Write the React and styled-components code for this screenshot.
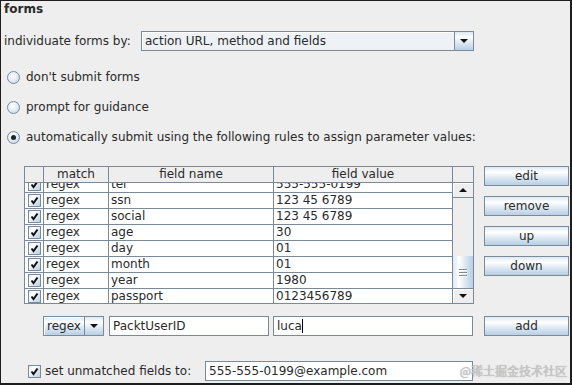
import React from "react";
import styled, { createGlobalStyle } from "styled-components";

const GlobalStyle = createGlobalStyle`
  html, body {
    margin: 0;
    padding: 0;
    background: #eeeeee;
  }
  * {
    box-sizing: border-box;
  }
`;

const LINE = "#7a8a99";
const TEXT = "#2a2a2a";
const buttonGradient = (dir) => `linear-gradient(${dir}, #dde8f3 0%, #ffffff 30%, #dde8f3 60%, #b8cfe5 100%)`;

const Frame = styled.div`
  position: relative;
  width: 572px;
  height: 385px;
  border-style: solid;
  border-color: #1d1d1d;
  border-width: 1px 2px 2px 1px;
  background: #eeeeee;
  padding: 0 0 0 3px;
  font-family: "DejaVu Sans", "Noto Sans", sans-serif;
  font-size: 12px;
  color: ${TEXT};
  overflow: hidden;
`;

const Title = styled.div`
  font-weight: bold;
  height: 18px;
  line-height: 16px;
`;

const ComboRow = styled.div`
  display: flex;
  align-items: center;
  height: 20px;
  margin-top: 12px;
`;

const Label = styled.span`
  width: ${(p) => p.$width || "auto"};
  white-space: nowrap;
`;

const Combo = styled.div`
  display: flex;
  width: ${(p) => p.$width};
  height: 20px;
  margin-left: ${(p) => p.$offset || "0px"};
  border: 1px solid ${LINE};
  background: #ffffff;
`;

const ComboText = styled.div`
  flex: 1;
  padding-left: 3px;
  line-height: 18px;
  border-right: 1px solid ${LINE};
  background: ${(p) => (p.$editable ? buttonGradient("to bottom") : "#eef2f6")};
  box-shadow: inset 1px 1px 0 #ffffff;
`;

const ComboArrow = styled.div`
  width: 18px;
  display: flex;
  align-items: center;
  justify-content: center;
  background: ${buttonGradient("to bottom")};
`;

const TriangleDown = styled.span`
  width: 0;
  height: 0;
  border-left: 4px solid transparent;
  border-right: 4px solid transparent;
  border-top: 4px solid #111111;
`;

const TriangleUp = styled.span`
  width: 0;
  height: 0;
  border-left: 4px solid transparent;
  border-right: 4px solid transparent;
  border-bottom: 4px solid #111111;
`;

const RadioRow = styled.label`
  display: flex;
  align-items: center;
  gap: 6px;
  height: 16px;
  padding-left: 3px;
  margin-top: ${(p) => p.$gap};
  white-space: nowrap;
`;

const RadioCircle = styled.span`
  width: 13px;
  height: 13px;
  border-radius: 50%;
  border: 1px solid ${LINE};
  background: radial-gradient(circle at 40% 35%, #ffffff 0%, #e6eef6 45%, #b8cfe5 100%);
  display: flex;
  align-items: center;
  justify-content: center;

  &::after {
    content: "";
    display: ${(p) => (p.$checked ? "block" : "none")};
    width: 5px;
    height: 5px;
    border-radius: 50%;
    background: #222222;
  }
`;

const Middle = styled.div`
  display: flex;
  align-items: flex-start;
  margin-top: 21px;
  padding-left: 20px;
`;

const Table = styled.div`
  display: flex;
  width: 450px;
  height: 138px;
  border: 1px solid ${LINE};
  background: #eeeeee;
`;

const Viewport = styled.div`
  display: flex;
  flex-direction: column;
  width: 427px;
`;

const HeaderRow = styled.div`
  display: flex;
  height: 16px;
  border-bottom: 1px solid ${LINE};
  background: #eeeeee;
`;

const HeaderCell = styled.div`
  width: ${(p) => p.$w}px;
  border-right: ${(p) => (p.$last ? "none" : `1px solid ${LINE}`)};
  text-align: center;
  line-height: 15px;
  white-space: nowrap;
  overflow: hidden;
`;

const Body = styled.div`
  flex: 1;
  overflow: hidden;
  background: #ffffff;
`;

const BodyInner = styled.div`
  margin-top: -6px;
`;

const Row = styled.div`
  display: flex;
  height: 16px;
  border-bottom: 1px solid ${LINE};
`;

const Cell = styled.div`
  width: ${(p) => p.$w}px;
  border-right: ${(p) => (p.$last ? "none" : `1px solid ${LINE}`)};
  padding-left: 2px;
  line-height: 15px;
  white-space: nowrap;
  overflow: hidden;
  display: ${(p) => (p.$center ? "flex" : "block")};
  align-items: center;
  justify-content: center;
  ${(p) => (p.$center ? "padding-left: 0;" : "")}
`;

const CheckBox = styled.span`
  width: 13px;
  height: 13px;
  border: 1px solid ${LINE};
  background: ${buttonGradient("135deg")};
  display: flex;
  align-items: center;
  justify-content: center;
  flex: none;
`;

const Scrollbar = styled.div`
  display: flex;
  flex-direction: column;
  width: 21px;
  border-left: 1px solid ${LINE};
`;

const Corner = styled.div`
  height: 16px;
  border-bottom: 1px solid ${LINE};
  background: #eeeeee;
`;

const ScrollButton = styled.div`
  height: 15px;
  display: flex;
  align-items: center;
  justify-content: center;
  background: #eeeeee;
  box-shadow: inset 1px 1px 0 #ffffff;
  border-bottom: ${(p) => (p.$top ? `1px solid ${LINE}` : "none")};
  border-top: ${(p) => (p.$top ? "none" : `1px solid ${LINE}`)};
`;

const Track = styled.div`
  flex: 1;
  background: #eeeeee;
`;

const Thumb = styled.div`
  height: 32px;
  background: ${buttonGradient("to right")};
  display: flex;
  flex-direction: column;
  align-items: center;
  justify-content: center;
  gap: 2px;
`;

const Grip = styled.span`
  width: 8px;
  height: 1px;
  background: ${LINE};
  box-shadow: 0 1px 0 #ffffff;
`;

const Buttons = styled.div`
  display: flex;
  flex-direction: column;
  gap: 10px;
  margin-left: 10px;
`;

const Button = styled.button`
  width: 85px;
  height: 20px;
  margin-left: ${(p) => p.$offset || "0px"};
  padding: 0;
  border: 1px solid ${LINE};
  background: ${buttonGradient("to bottom")};
  font-family: inherit;
  font-size: 12px;
  color: ${TEXT};
  line-height: 18px;
  text-align: center;
`;

const EditRow = styled.div`
  display: flex;
  align-items: center;
  height: 20px;
  margin-top: 12px;
`;

const Field = styled.div`
  width: ${(p) => p.$width};
  height: 20px;
  margin-left: ${(p) => p.$offset || "0px"};
  border: 1px solid ${LINE};
  background: #ffffff;
  padding-left: 3px;
  line-height: 18px;
  white-space: nowrap;
  overflow: hidden;
  display: flex;
  align-items: center;
`;

const Caret = styled.span`
  width: 1px;
  height: 14px;
  background: #000000;
`;

const BottomRow = styled.div`
  display: flex;
  align-items: center;
  height: 20px;
  margin-top: 25px;
  padding-left: 24px;
  gap: 4px;
`;

const Watermark = styled.div`
  position: absolute;
  right: 3px;
  bottom: 4px;
  font-family: "Noto Sans CJK SC", sans-serif;
  font-size: 12px;
  color: #c9c9c9;
  text-shadow: 0 0 1px #9a9a9a;
  white-space: nowrap;
`;

const columns = [
  { key: "check", title: "", w: 19 },
  { key: "match", title: "match", w: 65 },
  { key: "name", title: "field name", w: 165 },
  { key: "value", title: "field value", w: 178 },
];

const rules = [
  { name: "tel", value: "555-555-0199" },
  { name: "ssn", value: "123 45 6789" },
  { name: "social", value: "123 45 6789" },
  { name: "age", value: "30" },
  { name: "day", value: "01" },
  { name: "month", value: "01" },
  { name: "year", value: "1980" },
  { name: "passport", value: "0123456789" },
];

const Check = () => (
  <svg width="9" height="9" viewBox="0 0 9 9">
    <path d="M1.5 4.5 L3.5 7 L7.5 1.5" fill="none" stroke="#111" strokeWidth="2" />
  </svg>
);

const App = () => {
  return (
    <>
      <GlobalStyle />
      <Frame>
        <Title>forms</Title>

        <ComboRow>
          <Label $width="137px">individuate forms by:</Label>
          <Combo $width="333px">
            <ComboText>action URL, method and fields</ComboText>
            <ComboArrow>
              <TriangleDown />
            </ComboArrow>
          </Combo>
        </ComboRow>

        <RadioRow $gap="18px">
          <RadioCircle />
          don't submit forms
        </RadioRow>
        <RadioRow $gap="14px">
          <RadioCircle />
          prompt for guidance
        </RadioRow>
        <RadioRow $gap="14px">
          <RadioCircle $checked />
          automatically submit using the following rules to assign parameter values:
        </RadioRow>

        <Middle>
          <Table>
            <Viewport>
              <HeaderRow>
                {columns.map((c, i) => (
                  <HeaderCell key={c.key} $w={c.w} $last={i === columns.length - 1}>
                    {c.title}
                  </HeaderCell>
                ))}
              </HeaderRow>
              <Body>
                <BodyInner>
                  {rules.map((r) => (
                    <Row key={r.name}>
                      <Cell $w={19} $center>
                        <CheckBox>
                          <Check />
                        </CheckBox>
                      </Cell>
                      <Cell $w={65}>regex</Cell>
                      <Cell $w={165}>{r.name}</Cell>
                      <Cell $w={178} $last>
                        {r.value}
                      </Cell>
                    </Row>
                  ))}
                </BodyInner>
              </Body>
            </Viewport>
            <Scrollbar>
              <Corner />
              <ScrollButton $top>
                <TriangleUp />
              </ScrollButton>
              <Track />
              <Thumb>
                <Grip />
                <Grip />
                <Grip />
              </Thumb>
              <ScrollButton>
                <TriangleDown />
              </ScrollButton>
            </Scrollbar>
          </Table>

          <Buttons>
            <Button>edit</Button>
            <Button>remove</Button>
            <Button>up</Button>
            <Button>down</Button>
          </Buttons>
        </Middle>

        <EditRow>
          <Combo $width="61px" $offset="39px">
            <ComboText $editable>regex</ComboText>
            <ComboArrow>
              <TriangleDown />
            </ComboArrow>
          </Combo>
          <Field $width="160px" $offset="5px">PacktUserID</Field>
          <Field $width="200px" $offset="4px">
            luca
            <Caret />
          </Field>
          <Button $offset="11px">add</Button>
        </EditRow>

        <BottomRow>
          <CheckBox>
            <Check />
          </CheckBox>
          <Label $width="156px">set unmatched fields to:</Label>
          <Field $width="268px">555-555-0199@example.com</Field>
        </BottomRow>

        <Watermark>@稀土掘金技术社区</Watermark>
      </Frame>
    </>
  );
};

export default App;
